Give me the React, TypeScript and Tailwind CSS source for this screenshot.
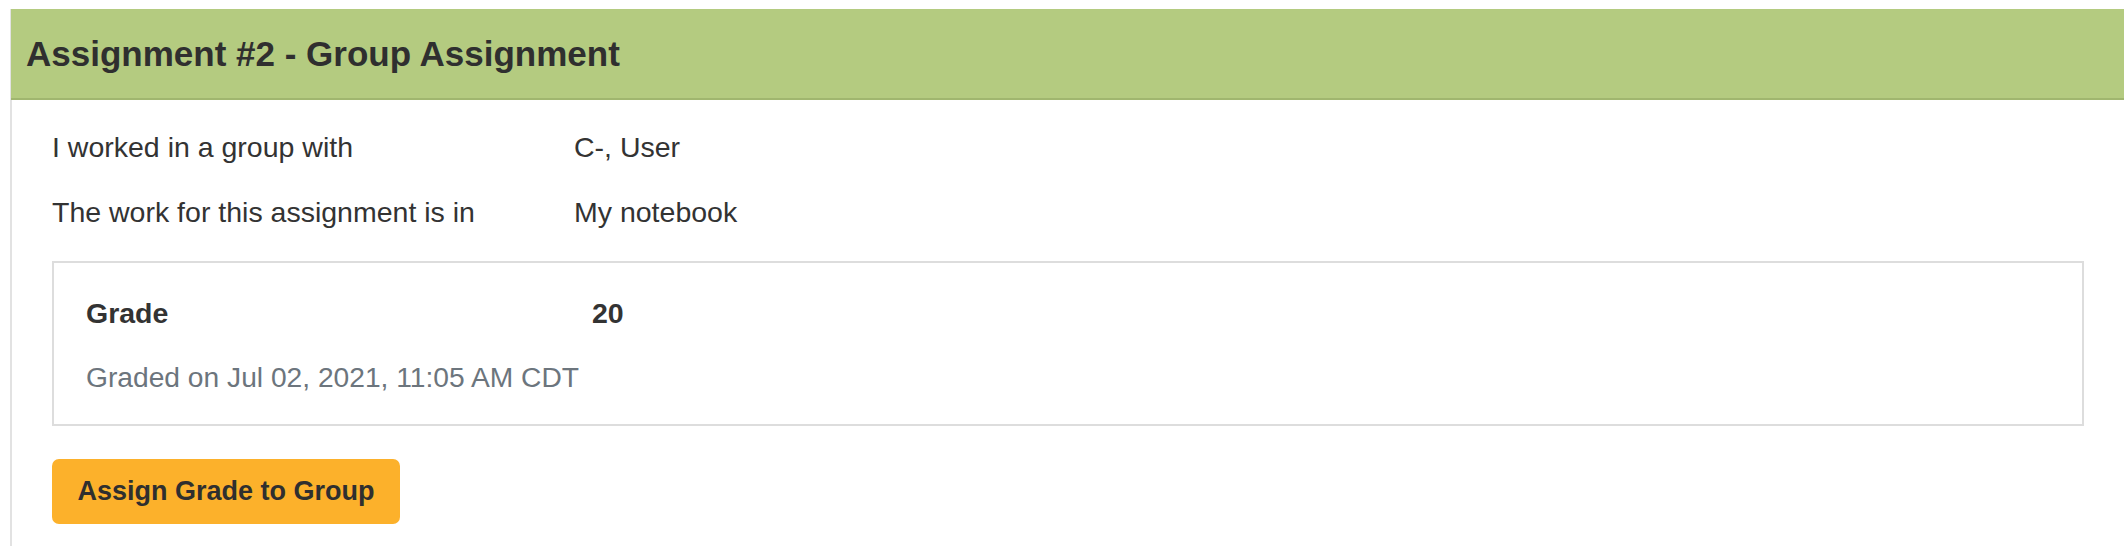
import React from "react";

export default function App() {
  return (
    <div
      className="w-full h-[546px] bg-white pt-[9px] text-[#333333] overflow-hidden"
      style={{ fontFamily: '"Liberation Sans", Arial, Helvetica, sans-serif' }}
    >
      <div className="ml-[10px] border-l-2 border-[#e2e2e2] h-[537px]">
        <div className="h-[91px] -ml-[1px] bg-[#b4cb80] border-b-2 border-[#a0b66f] flex items-center pl-[15px]">
          <h1 className="text-[35px] font-bold leading-none text-[#2f2f2f]">
            Assignment #2 - Group Assignment
          </h1>
        </div>
        <div className="px-[40px] pt-[27px]">
          <div className="flex flex-col gap-[25px] text-[28.5px] leading-[40px]">
            <div className="flex">
              <div className="w-[522px] shrink-0">I worked in a group with</div>
              <div>C-, User</div>
            </div>
            <div className="flex">
              <div className="w-[522px] shrink-0">The work for this assignment is in</div>
              <div>My notebook</div>
            </div>
          </div>
          <div className="mt-[29px] border-2 border-[#dddddd] pt-[30px] pb-[27px] pl-[32px] pr-[32px]">
            <div className="flex text-[28.5px] leading-[40px] font-bold">
              <div className="w-[506px] shrink-0">Grade</div>
              <div>20</div>
            </div>
            <div className="mt-[24px] text-[28.2px] leading-[40px] text-[#6c757d]">
              Graded on Jul 02, 2021, 11:05 AM CDT
            </div>
          </div>
          <button
            type="button"
            className="mt-[33px] w-[348px] h-[65px] rounded-[7px] bg-[#fcb12b] flex items-center justify-center text-[27px] font-bold text-[#2f2f2f]"
          >
            Assign Grade to Group
          </button>
        </div>
      </div>
    </div>
  );
}
